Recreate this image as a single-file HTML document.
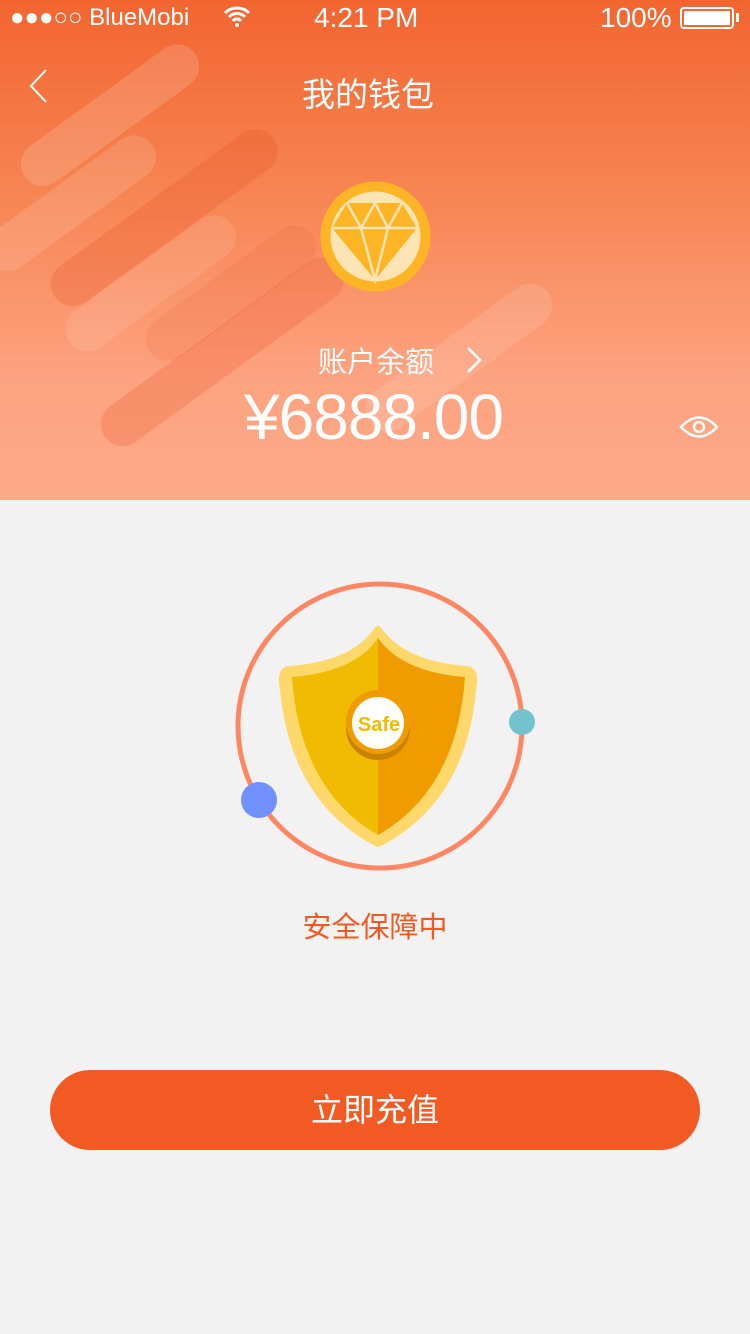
<!DOCTYPE html>
<html><head><meta charset="utf-8"><style>
*{margin:0;padding:0;box-sizing:border-box}
body{width:750px;height:1334px;background:#f2f2f2;font-family:"Liberation Sans","Noto Sans CJK SC",sans-serif;position:relative;overflow:hidden}
.hdr{position:absolute;left:0;top:0;width:750px;height:500px;background:linear-gradient(#f26530 0%,#f6824f 35%,#fda27f 75%,#fdaa88 100%);overflow:hidden}
.bar{position:absolute;height:44px;border-radius:22px;transform:rotate(-36deg);transform-origin:left center}
.t{position:absolute;color:#fff;white-space:nowrap}
</style></head><body>
<div class="hdr">
<div class="bar" style="left:25px;top:155px;width:210px;background:rgba(255,255,255,.15)"></div>
<div class="bar" style="left:-10px;top:240px;width:200px;background:rgba(255,255,255,.13)"></div>
<div class="bar" style="left:55px;top:275px;width:270px;background:rgba(230,80,30,.25)"></div>
<div class="bar" style="left:70px;top:320px;width:200px;background:rgba(255,255,255,.1)"></div>
<div class="bar" style="left:150px;top:330px;width:200px;background:rgba(230,80,30,.12)"></div>
<div class="bar" style="left:105px;top:415px;width:290px;background:rgba(240,100,60,.3)"></div>
<div class="bar" style="left:370px;top:400px;width:220px;background:rgba(255,255,255,.12)"></div>
<div class="t" style="left:10px;top:4px;font-size:24px">●●●○○ BlueMobi</div>
<div class="t" style="left:314px;top:2px;font-size:28px">4:21 PM</div>
<div class="t" style="left:600px;top:2px;font-size:28px">100%</div>
<div style="position:absolute;left:680px;top:7px;width:54px;height:22px;border:2px solid #fff;border-radius:4px;padding:2px"><div style="background:#fff;height:100%;border-radius:1px"></div></div>
<div style="position:absolute;left:736px;top:13px;width:3px;height:9px;background:#fff"></div>
<svg style="position:absolute;left:222px;top:4px" width="30" height="24" viewBox="0 0 30 24"><path d="M3 9a17 17 0 0 1 24 0M7 13a11 11 0 0 1 16 0M11 17a5 5 0 0 1 8 0" stroke="#fff" stroke-width="3" fill="none"/><circle cx="15" cy="21" r="2" fill="#fff"/></svg>
<svg style="position:absolute;left:28px;top:68px" width="22" height="36"><path d="M18 2L3 18L18 34" stroke="#fff" stroke-width="2" fill="none"/></svg>
<div class="t" style="left:302px;top:68px;font-size:33px">我的钱包</div>
<svg style="position:absolute;left:320px;top:181px" width="111" height="111" viewBox="0 0 111 111">
<circle cx="55.5" cy="55.5" r="55" fill="#fdb526"/><circle cx="55.5" cy="55.5" r="45" fill="#fde4b4"/>
<path d="M27 22H82L97 47L55 99L12 47Z" fill="#fdb526"/>
<path d="M12 47H97M27 22L41 47L55 99L68 47L82 22M41 47L55 22L68 47" stroke="#fde4b4" stroke-width="2.5" fill="none"/>
</svg>
<div class="t" style="left:318px;top:339px;font-size:29px">账户余额</div>
<svg style="position:absolute;left:465px;top:346px" width="18" height="28"><path d="M3 2L15 14L3 26" stroke="#fff" stroke-width="2.5" fill="none"/></svg>
<div class="t" style="left:244px;top:380px;font-size:64px;letter-spacing:-1px">¥6888.00</div>
<svg style="position:absolute;left:679px;top:412px" width="40" height="30" viewBox="0 0 40 30"><path d="M2 15Q20-4 38 15Q20 34 2 15Z" stroke="#fff" stroke-width="2.5" fill="none"/><circle cx="20" cy="15" r="5" stroke="#fff" stroke-width="2.5" fill="none"/></svg>
</div>
<svg style="position:absolute;left:230px;top:570px" width="310" height="310" viewBox="230 570 310 310">
<circle cx="380" cy="726" r="142" stroke="#fe8763" stroke-width="5" fill="none"/>
<path d="M378 630Q355 665 290 670Q280 670 284 690Q295 800 378 843Q462 800 472 690Q476 670 466 670Q402 665 378 630Z" fill="#fed86b" stroke="#fed86b" stroke-width="8" stroke-linejoin="round"/>
<path d="M378 638Q355 672 292 677Q300 790 378 835Z" fill="#f0bb00"/>
<path d="M378 638Q402 672 465 677Q457 790 378 835Z" fill="#f09c00"/>
<circle cx="378" cy="728" r="32" fill="#c88200"/>
<circle cx="378" cy="722" r="32" fill="#f09c00"/>
<circle cx="378" cy="723" r="26" fill="#fff"/>
<text x="379" y="731" text-anchor="middle" font-family="Liberation Sans" font-weight="bold" font-size="20" fill="#f0bb00">Safe</text>
<circle cx="522" cy="722" r="13" fill="#73c2ce"/>
<circle cx="259" cy="800" r="18" fill="#7090ff"/>
</svg>
<div style="position:absolute;left:0;width:750px;top:904px;text-align:center;font-size:29px;color:#f05a22">安全保障中</div>
<div style="position:absolute;left:50px;top:1070px;width:650px;height:80px;border-radius:40px;background:#f15a22;color:#fff;font-size:32px;text-align:center;line-height:80px">立即充值</div>
</body></html>
